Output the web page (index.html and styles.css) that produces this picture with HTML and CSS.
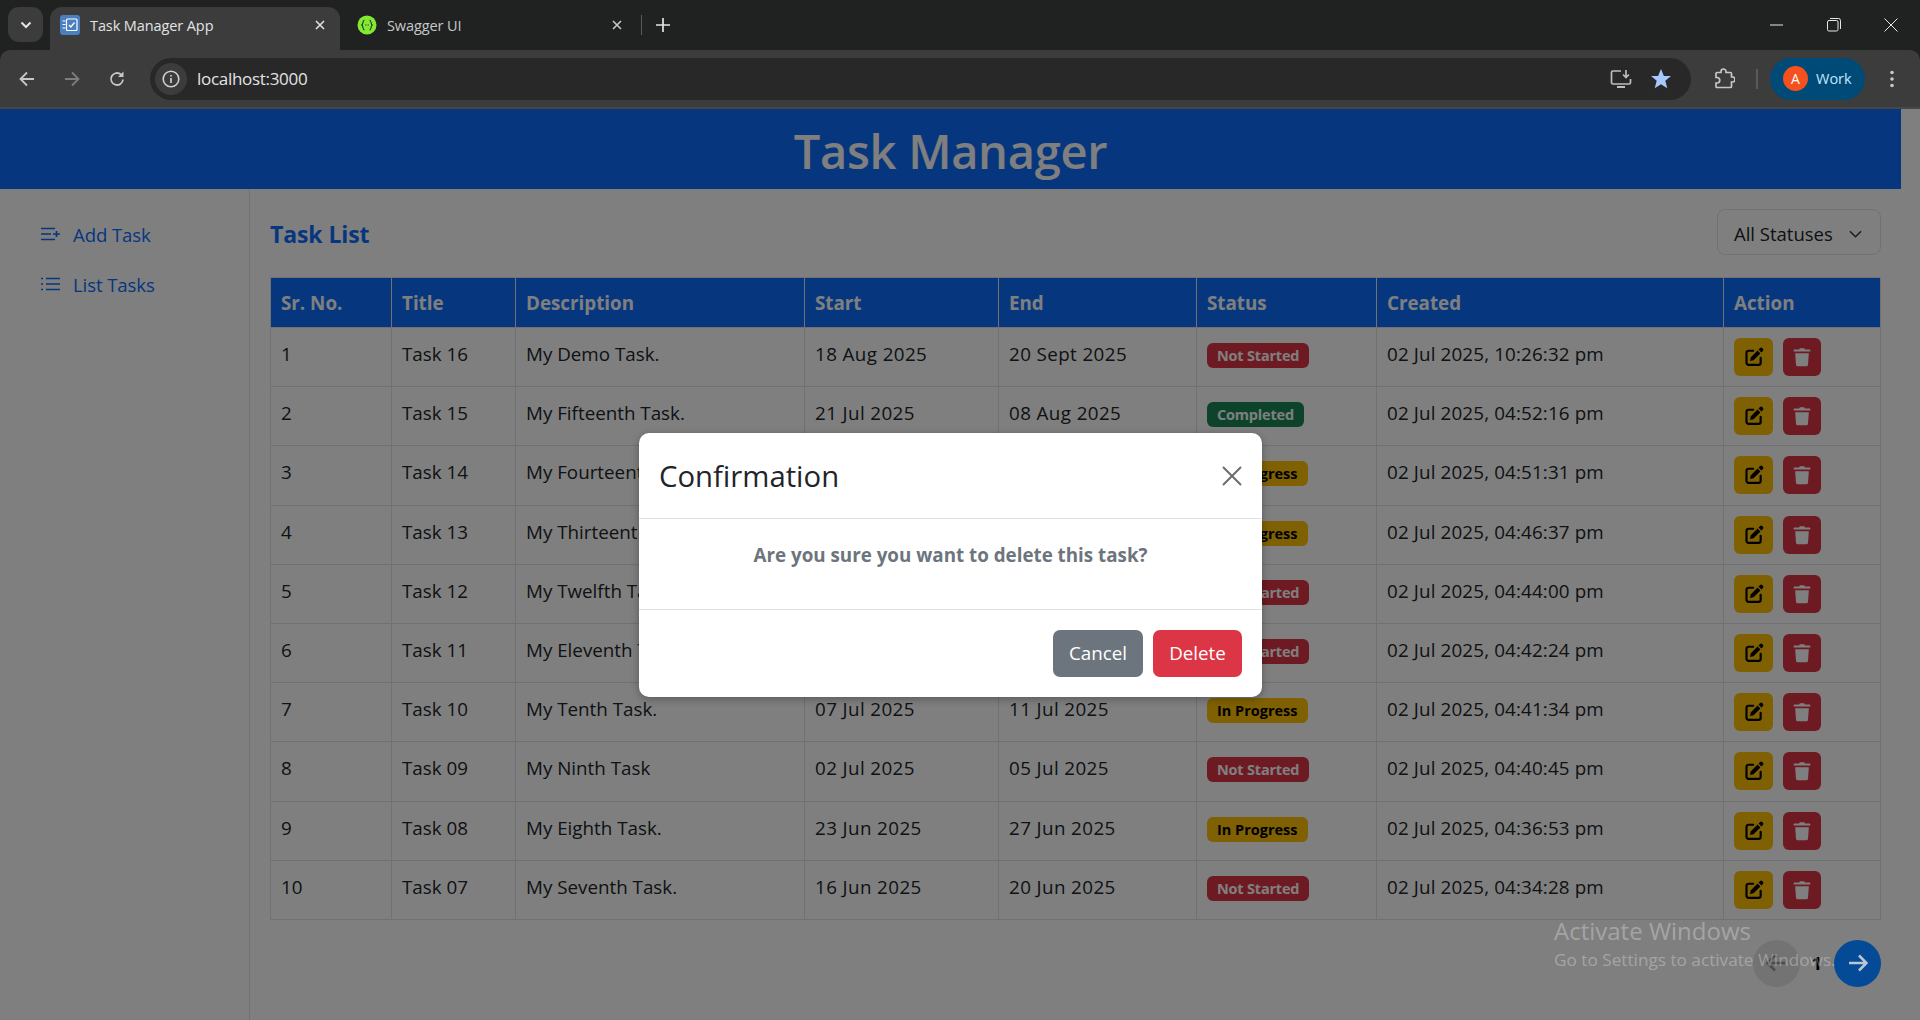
FILE: index.html
```html
<!DOCTYPE html>
<html lang="en">
<head>
<meta charset="UTF-8">
<title>Task Manager App</title>
<link rel="stylesheet" href="styles.css">
</head>
<body>
<svg class="defs" width="0" height="0">
  <symbol id="ic-edit" viewBox="0 0 24 24">
    <path d="M11 4.500H5.500A2.500 2.500 0 0 0 3 7v12a2.500 2.500 0 0 0 2.500 2.500h12A2.500 2.500 0 0 0 20 19v-6" fill="none" stroke="currentColor" stroke-width="2.600" stroke-linecap="round"/>
    <path d="M19.300 1.300a1.800 1.800 0 0 1 2.500 0l.9.9a1.800 1.800 0 0 1 0 2.500L20.900 6.500l-3.400-3.400zM16.300 4.300l3.400 3.400-8.300 8.300-4.100.7.700-4.100z" fill="currentColor"/>
  </symbol>
  <symbol id="ic-trash" viewBox="0 0 24 24">
    <path d="M9.500 1.500h5l1 1.500h5.500a1 1 0 0 1 1 1v1.500H2V4a1 1 0 0 1 1-1h5.500zM3.800 7.500h16.400l-1 13.700a2 2 0 0 1-2 1.800H6.800a2 2 0 0 1-2-1.800z" fill="currentColor"/>
  </symbol>
</svg>

<div class="chrome">
  <div class="tabstrip">
    <div class="tab-search"><svg width="12" height="8" viewBox="0 0 12 8"><path d="M1.500 1.500 6 6l4.500-4.500" fill="none" stroke="#e3e3e3" stroke-width="2"/></svg></div>
    <div class="tab active">
      <svg class="favicon" viewBox="0 0 20 20"><rect width="20" height="20" rx="3" fill="#4a7fc0"/><rect x="6.500" y="4" width="10.500" height="11.500" rx="1" fill="none" stroke="#fff" stroke-width="1.200"/><path d="M9 10l1.800 2 3.700-4.500" fill="none" stroke="#fff" stroke-width="1.300"/><path d="M2.500 6h3M2.500 9.500h3M2.500 13h3" stroke="#fff"/></svg>
      <span class="tab-title">Task Manager App</span>
      <svg class="tab-close" viewBox="0 0 12 12"><path d="M2 2l8 8M10 2l-8 8" stroke="#e3e3e3" stroke-width="1.600"/></svg>
    </div>
    <div class="tab">
      <svg class="favicon" viewBox="0 0 20 20"><circle cx="10" cy="10" r="9.500" fill="#85ea2d"/><path d="M7.500 5C5.500 5 6.500 9 4.800 10 6.500 11 5.500 15 7.500 15M12.500 5c2 0 1 4 2.700 5-1.700 1-.7 5-2.700 5" fill="none" stroke="#173647" stroke-width="1.100"/><path d="M8 10h.8M9.600 10h.8M11.200 10h.8" stroke="#173647" stroke-width="1.100"/></svg>
      <span class="tab-title dim">Swagger UI</span>
      <svg class="tab-close" viewBox="0 0 12 12"><path d="M2 2l8 8M10 2l-8 8" stroke="#c7c7c7" stroke-width="1.600"/></svg>
    </div>
    <div class="tab-sep"></div>
    <svg class="new-tab" viewBox="0 0 14 14"><path d="M7 0v14M0 7h14" stroke="#e3e3e3" stroke-width="1.700"/></svg>
    <div class="win-controls">
      <svg viewBox="0 0 14 14" width="14" height="14"><path d="M0 7h13" stroke="#e6e6e6"/></svg>
      <svg viewBox="0 0 14 14" width="14" height="14"><rect x=".5" y="2.500" width="10.500" height="10.500" rx="1.500" fill="none" stroke="#e6e6e6"/><path d="M3 .5h8.500a2 2 0 0 1 2 2V11" fill="none" stroke="#e6e6e6"/></svg>
      <svg viewBox="0 0 14 14" width="14" height="14"><path d="M.5.5l13 13M13.500.5l-13 13" stroke="#e6e6e6"/></svg>
    </div>
  </div>
  <div class="toolbar">
    <svg class="nav-ic" viewBox="0 0 18 18"><path d="M16 9H3M9 2.500 2.500 9 9 15.500" fill="none" stroke="#c7c7c7" stroke-width="1.800"/></svg>
    <svg class="nav-ic" viewBox="0 0 18 18"><path d="M2 9h13M9 2.500 15.500 9 9 15.500" fill="none" stroke="#7d7d7d" stroke-width="1.800"/></svg>
    <svg class="nav-ic" viewBox="0 0 18 18"><path d="M15 9.500A6 6 0 1 1 13 4.500" fill="none" stroke="#c7c7c7" stroke-width="1.800"/><path d="M15.500 1.500v5.500H10z" fill="#c7c7c7"/></svg>
    <div class="omnibox">
      <div class="site-info"><svg viewBox="0 0 18 18" width="18" height="18"><circle cx="9" cy="9" r="7.800" fill="none" stroke="#d0d0d0" stroke-width="1.600"/><path d="M9 8v5M9 5v1.600" stroke="#d0d0d0" stroke-width="1.700"/></svg></div>
      <span class="url">localhost:3000</span>
      <svg class="omni-install" viewBox="0 0 22 20"><path d="M11 2H3a1.500 1.500 0 0 0-1.500 1.500v10A1.500 1.500 0 0 0 3 15h16a1.500 1.500 0 0 0 1.500-1.500V10" fill="none" stroke="#bdbdbd" stroke-width="1.700"/><path d="M7 18h8" stroke="#bdbdbd" stroke-width="2"/><path d="M16 1v7M13 5.500l3 3 3-3" fill="none" stroke="#bdbdbd" stroke-width="1.700"/></svg>
      <svg class="omni-star" viewBox="0 0 20 20"><path d="M10 0l2.900 7h7.100l-5.700 4.700 2 7.600L10 15.200l-6.300 4.100 2-7.600L0 7h7.100z" fill="#a8c7fa"/></svg>
    </div>
    <svg class="ext-ic" viewBox="0 0 22 22"><path d="M8 4.500V3.500a2.500 2.500 0 0 1 5 0v1h4.500a1 1 0 0 1 1 1V9h1a2.500 2.500 0 0 1 0 5h-1v4.500a1 1 0 0 1-1 1H4a1 1 0 0 1-1-1V15h1a2.500 2.500 0 0 0 0-5.500H3v-4a1 1 0 0 1 1-1z" fill="none" stroke="#c7c7c7" stroke-width="1.700"/></svg>
    <div class="tool-sep"></div>
    <div class="profile"><span class="avatar">A</span><span>Work</span></div>
    <svg class="menu-ic" viewBox="0 0 4 18"><circle cx="2" cy="2.500" r="1.800" fill="#c7c7c7"/><circle cx="2" cy="9" r="1.800" fill="#c7c7c7"/><circle cx="2" cy="15.500" r="1.800" fill="#c7c7c7"/></svg>
  </div>
</div>

<div class="viewport">
  <div class="page">
    <header class="app-header">Task Manager</header>
    <div class="app-body">
      <nav class="sidebar">
        <a class="side-link">
          <svg viewBox="0 0 19 14" width="19" height="14"><path d="M0 1.500h14M0 7h10M0 12.500h14M12 7h7M15.500 4v6" fill="none" stroke="currentColor" stroke-width="1.700"/></svg>
          Add Task
        </a>
        <a class="side-link">
          <svg viewBox="0 0 19 14" width="19" height="14"><path d="M5 1.500h14M5 7h14M5 12.500h14" fill="none" stroke="currentColor" stroke-width="1.700"/><path d="M0 1.500h2M0 7h2M0 12.500h2" stroke="currentColor" stroke-width="1.700"/></svg>
          List Tasks
        </a>
      </nav>
      <main class="content">
        <div class="list-head">
          <h2>Task List</h2>
          <div class="status-select">All Statuses
            <svg viewBox="0 0 14 8" width="13" height="8"><path d="M1 1l6 6 6-6" fill="none" stroke="#343a40" stroke-width="1.600"/></svg>
          </div>
        </div>
        <table class="tasks">
          <thead>
            <tr><th class="c-no">Sr. No.</th><th class="c-title">Title</th><th class="c-desc">Description</th><th class="c-date">Start</th><th class="c-end">End</th><th class="c-status">Status</th><th class="c-created">Created</th><th>Action</th></tr>
          </thead>
          <tbody>
            <tr><td>1</td><td>Task 16</td><td>My Demo Task.</td><td>18 Aug 2025</td><td>20 Sept 2025</td><td><span class="badge red">Not Started</span></td><td>02 Jul 2025, 10:26:32 pm</td><td class="actions"><button class="act yellow"><svg><use href="#ic-edit"/></svg></button><button class="act crimson"><svg><use href="#ic-trash"/></svg></button></td></tr>
            <tr><td>2</td><td>Task 15</td><td>My Fifteenth Task.</td><td>21 Jul 2025</td><td>08 Aug 2025</td><td><span class="badge green">Completed</span></td><td>02 Jul 2025, 04:52:16 pm</td><td class="actions"><button class="act yellow"><svg><use href="#ic-edit"/></svg></button><button class="act crimson"><svg><use href="#ic-trash"/></svg></button></td></tr>
            <tr><td>3</td><td>Task 14</td><td>My Fourteenth Task.</td><td>14 Jul 2025</td><td>18 Jul 2025</td><td><span class="badge amber">In Progress</span></td><td>02 Jul 2025, 04:51:31 pm</td><td class="actions"><button class="act yellow"><svg><use href="#ic-edit"/></svg></button><button class="act crimson"><svg><use href="#ic-trash"/></svg></button></td></tr>
            <tr><td>4</td><td>Task 13</td><td>My Thirteenth Task.</td><td>10 Jul 2025</td><td>14 Jul 2025</td><td><span class="badge amber">In Progress</span></td><td>02 Jul 2025, 04:46:37 pm</td><td class="actions"><button class="act yellow"><svg><use href="#ic-edit"/></svg></button><button class="act crimson"><svg><use href="#ic-trash"/></svg></button></td></tr>
            <tr><td>5</td><td>Task 12</td><td>My Twelfth Task.</td><td>09 Jul 2025</td><td>12 Jul 2025</td><td><span class="badge red">Not Started</span></td><td>02 Jul 2025, 04:44:00 pm</td><td class="actions"><button class="act yellow"><svg><use href="#ic-edit"/></svg></button><button class="act crimson"><svg><use href="#ic-trash"/></svg></button></td></tr>
            <tr><td>6</td><td>Task 11</td><td>My Eleventh Task.</td><td>08 Jul 2025</td><td>11 Jul 2025</td><td><span class="badge red">Not Started</span></td><td>02 Jul 2025, 04:42:24 pm</td><td class="actions"><button class="act yellow"><svg><use href="#ic-edit"/></svg></button><button class="act crimson"><svg><use href="#ic-trash"/></svg></button></td></tr>
            <tr><td>7</td><td>Task 10</td><td>My Tenth Task.</td><td>07 Jul 2025</td><td>11 Jul 2025</td><td><span class="badge amber">In Progress</span></td><td>02 Jul 2025, 04:41:34 pm</td><td class="actions"><button class="act yellow"><svg><use href="#ic-edit"/></svg></button><button class="act crimson"><svg><use href="#ic-trash"/></svg></button></td></tr>
            <tr><td>8</td><td>Task 09</td><td>My Ninth Task</td><td>02 Jul 2025</td><td>05 Jul 2025</td><td><span class="badge red">Not Started</span></td><td>02 Jul 2025, 04:40:45 pm</td><td class="actions"><button class="act yellow"><svg><use href="#ic-edit"/></svg></button><button class="act crimson"><svg><use href="#ic-trash"/></svg></button></td></tr>
            <tr><td>9</td><td>Task 08</td><td>My Eighth Task.</td><td>23 Jun 2025</td><td>27 Jun 2025</td><td><span class="badge amber">In Progress</span></td><td>02 Jul 2025, 04:36:53 pm</td><td class="actions"><button class="act yellow"><svg><use href="#ic-edit"/></svg></button><button class="act crimson"><svg><use href="#ic-trash"/></svg></button></td></tr>
            <tr><td>10</td><td>Task 07</td><td>My Seventh Task.</td><td>16 Jun 2025</td><td>20 Jun 2025</td><td><span class="badge red">Not Started</span></td><td>02 Jul 2025, 04:34:28 pm</td><td class="actions"><button class="act yellow"><svg><use href="#ic-edit"/></svg></button><button class="act crimson"><svg><use href="#ic-trash"/></svg></button></td></tr>
          </tbody>
        </table>
        <div class="pager">
          <button class="page-btn off"><svg viewBox="0 0 20 18" width="20" height="18"><path d="M19 9H2M9 1.500 1.500 9 9 16.500" fill="none" stroke="currentColor" stroke-width="2.600"/></svg></button>
          <span class="page-num">1</span>
          <button class="page-btn on"><svg viewBox="0 0 20 18" width="20" height="18"><path d="M1 9h17M11 1.500 18.500 9 11 16.500" fill="none" stroke="currentColor" stroke-width="2.600"/></svg></button>
        </div>
      </main>
    </div>
  </div>

  <div class="backdrop">
    <div class="modal">
      <div class="modal-head">
        <h3>Confirmation</h3>
        <svg class="modal-x" viewBox="0 0 20 20"><path d="M1 1l18 18M19 1 1 19" stroke="#6c6c6c" stroke-width="2"/></svg>
      </div>
      <div class="modal-body">Are you sure you want to delete this task?</div>
      <div class="modal-foot">
        <button class="btn grey">Cancel</button>
        <button class="btn danger">Delete</button>
      </div>
    </div>
  </div>

  <div class="activate">
    <div class="activate-big">Activate Windows</div>
    <div class="activate-small">Go to Settings to activate Windows.</div>
  </div>
</div>
</body>
</html>
```

FILE: styles.css
```css
* { margin:0; padding:0; box-sizing:border-box; }
html, body { height:100%; overflow:hidden; }
body { font-family:"Open Sans", "Noto Sans", Arial, sans-serif; font-size:18.8px; color:#212529; background:#fff; display:flex; flex-direction:column; }
.defs { position:absolute; }

/* browser chrome */
.chrome { flex-shrink:0; background:#202222; }
.tabstrip { height:50px; display:flex; align-items:flex-end; padding-left:8px; }
.tab-search { width:35px; height:35px; margin-bottom:8px; border-radius:11px; background:#3c3c3c; display:flex; align-items:center; justify-content:center; }
.tab { width:290px; height:43px; margin-left:7px; padding:0 14px 7px 10px; border-radius:12px 12px 0 0; display:flex; align-items:center; gap:10px; }
.tab + .tab { margin-left:0; width:297px; padding-left:17px; }
.tab.active { background:#3c3c3c; }
.favicon { width:20px; height:20px; flex-shrink:0; }
.tab-title { flex:1; font-size:14.5px; letter-spacing:-.1px; color:#e3e3e3; white-space:nowrap; }
.tab-title.dim { color:#c7c7c7; }
.tab-close { width:12px; height:12px; }
.tab-sep { width:1px; height:20px; margin:0 0 15px 4px; background:#5a5a5a; }
.new-tab { width:14px; height:14px; margin:0 0 18px 14px; }
.win-controls { margin-left:auto; height:100%; padding-right:22px; display:flex; align-items:center; gap:43px; }
.toolbar { height:59px; background:#3c3c3c; border-radius:10px 10px 0 0; border-bottom:2px solid #474747; display:flex; align-items:center; padding-left:18px; }
.nav-ic { width:18px; height:18px; margin-right:27px; }
.omnibox { width:1541px; height:42px; margin-left:-3px; border-radius:21px; background:#282828; display:flex; align-items:center; padding-left:5px; }
.site-info { width:32px; height:32px; border-radius:50%; background:#3c3c3c; display:flex; align-items:center; justify-content:center; }
.url { flex:1; margin-left:10px; font-size:17px; letter-spacing:-.3px; color:#e3e3e3; }
.omni-install { width:22px; height:20px; margin-right:19px; }
.omni-star { width:20px; height:20px; margin-right:20px; }
.ext-ic { width:22px; height:22px; margin-left:22px; }
.tool-sep { width:2px; height:20px; margin-left:21px; background:#5a5a5a; }
.profile { width:95px; height:42px; margin-left:12px; border-radius:21px; background:#004a77; display:flex; align-items:center; gap:8px; padding-left:13px; font-size:14.5px; color:#c2e7ff; }
.avatar { width:25px; height:25px; border-radius:50%; background:#f4511e; color:#fff; display:flex; align-items:center; justify-content:center; font-size:14px; }
.menu-ic { width:4px; height:18px; margin-left:25px; }

/* page under the modal */
.viewport { position:relative; flex:1; min-height:0; }
.page { width:1901px; height:100%; display:flex; flex-direction:column; }
.app-header { height:80px; flex-shrink:0; background:#0d6efd; color:#fff; font-size:47px; font-weight:600; letter-spacing:-.3px; text-align:center; line-height:84px; }
.app-body { flex:1; display:flex; }
.sidebar { width:250px; flex-shrink:0; border-right:1px solid #dee2e6; padding:20px 0 0 41px; }
.side-link { display:flex; align-items:center; gap:13px; height:50px; font-size:18.6px; letter-spacing:-.1px; color:#0d6efd; }
.content { flex:1; padding:20px 20px 0 20px; }
.list-head { display:flex; justify-content:space-between; align-items:center; height:46px; margin-bottom:22px; }
.list-head h2 { padding-top:3px; font-size:23px; font-weight:700; letter-spacing:-.1px; color:#0d6efd; }
.status-select { width:164px; height:46px; padding:3px 18px 0 16px; border:1px solid #dee2e6; border-radius:8px; display:flex; align-items:center; justify-content:space-between; font-size:18.5px; }

.tasks { width:100%; table-layout:fixed; border-collapse:collapse; }
.tasks th, .tasks td { border:1px solid #dee2e6; padding:0 10px; text-align:left; white-space:nowrap; overflow:hidden; }
.tasks th { height:50px; background:#0d6efd; color:#fff; font-weight:700; }
.tasks td { height:59.2px; padding-top:11px; padding-bottom:11px; vertical-align:top; line-height:30px; }
.tasks td:nth-child(4), .tasks td:nth-child(5) { letter-spacing:.4px; }
.tasks td:nth-child(7) { letter-spacing:.15px; }
.c-no { width:121px; }
.c-title { width:124px; }
.c-desc { width:289px; }
.c-date { width:194px; }
.c-end { width:198px; }
.c-status { width:180px; }
.c-created { width:347px; }
.badge { display:inline-block; height:25px; padding:0 10px; border-radius:6px; font-size:14.5px; font-weight:700; line-height:25px; color:#fff; vertical-align:top; margin-top:4px; letter-spacing:-.2px; }
.badge.red { background:#dc3545; }
.badge.green { background:#198754; }
.badge.amber { background:#ffc107; color:#000; letter-spacing:0; }
.tasks td.actions { padding:10px 10px 0; }
.act { width:39px; height:38px; margin-right:10px; border:none; border-radius:6px; display:inline-flex; align-items:center; justify-content:center; vertical-align:top; }
.act svg { width:20px; height:20px; }
.act.yellow { background:#ffc107; color:#000; }
.act.crimson { width:38px; background:#dc3545; color:#fff; }
.pager { display:flex; justify-content:flex-end; align-items:center; gap:12px; margin-top:20px; }
.page-btn { width:47px; height:47px; border:none; border-radius:50%; display:flex; align-items:center; justify-content:center; }
.page-btn.off { background:#e6e6e6; color:#9a9a9a; }
/* the next button sits above the backdrop in the reference */
.page-btn.on { position:relative; z-index:2; background:#044a96; color:#b9c5d2; }
.page-num { font-size:18px; font-weight:700; color:#000; }

/* modal */
.backdrop { position:absolute; inset:0; z-index:1; padding-right:19px; background:rgba(0,0,0,.5); display:flex; align-items:center; justify-content:center; }
.modal { width:623px; height:264px; background:#fff; border-radius:10px; display:flex; flex-direction:column; box-shadow:0 2px 8px rgba(0,0,0,.3); }
.modal-head { height:86px; padding:2px 20px 0; border-bottom:1px solid #dee2e6; display:flex; align-items:center; justify-content:space-between; }
.modal-head h3 { font-size:29.3px; font-weight:500; color:#212529; }
.modal-x { width:20px; height:20px; }
.modal-body { height:90px; padding-top:23px; text-align:center; font-weight:700; color:#6c757d; }
.modal-foot { flex:1; padding:0 20px; border-top:1px solid #dee2e6; display:flex; align-items:center; justify-content:flex-end; gap:10px; }
.btn { width:90px; height:47px; border:none; border-radius:7px; color:#fff; font:inherit; }
.btn.grey { background:#6c757d; }
.btn.danger { width:89px; background:#dc3545; }

.activate { position:absolute; z-index:3; left:1554px; top:807px; color:rgba(255,255,255,.3); pointer-events:none; }
.activate-big { font-size:24px; line-height:30px; }
.activate-small { font-size:17.2px; line-height:28px; }
```
